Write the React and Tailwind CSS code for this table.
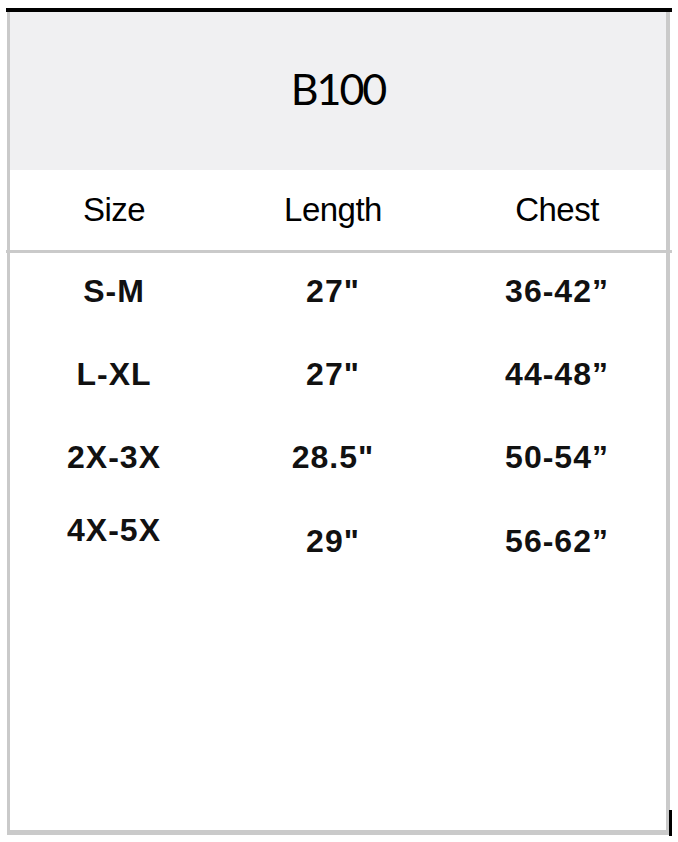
const rows = [
  { size: 'S-M', length: '27"', chest: '36-42”' },
  { size: 'L-XL', length: '27"', chest: '44-48”' },
  { size: '2X-3X', length: '28.5"', chest: '50-54”' },
  { size: '4X-5X', length: '29"', chest: '56-62”', raised: true },
];

const SizeChart = () => {
  return (
    <div className="relative ml-[6px] pt-[8px] w-[666px]">
      {/* top rule */}
      <div className="h-[4px] bg-black w-full" />

      <div className="ml-[1px] w-[663px] h-[823px] border-l-[3px] border-r-[4px] border-b-[5px] border-[#cacaca] flex flex-col">
        {/* title band */}
        <div className="h-[158px] bg-[#f0f0f2] flex justify-center pt-[55px]">
          <h1 className="font-['Lato',sans-serif] text-[43px] leading-none text-black tracking-[-2px]">B100</h1>
        </div>

        {/* column labels */}
        <div className="h-[80px] grid grid-cols-[208px_230px_1fr] pt-[23px] font-['Liberation_Sans',Arial,sans-serif] text-[33px] leading-none text-black tracking-[-0.5px]">
          <div className="text-center">Size</div>
          <div className="text-center">Length</div>
          <div className="text-center">Chest</div>
        </div>
        <div className="-ml-[4px] w-[666px] h-[3px] bg-[#cacaca]" />

        {/* rows */}
        <div className="font-['Liberation_Sans',Arial,sans-serif] text-[32px] font-bold leading-none tracking-[1px] text-[#111]">
          {rows.map((r) => (
            <div key={r.size} className="h-[83px] grid grid-cols-[208px_230px_1fr]">
              <div className={`text-center ${r.raised ? 'pt-[12px]' : 'pt-[22px]'}`}>{r.size}</div>
              <div className={`text-center ${r.raised ? 'pt-[23px]' : 'pt-[22px]'}`}>{r.length}</div>
              <div className={`text-center ${r.raised ? 'pt-[23px]' : 'pt-[22px]'}`}>{r.chest}</div>
            </div>
          ))}
        </div>
      </div>

      {/* stray edge mark bottom right */}
      <div className="absolute left-[663px] top-[810px] w-[3px] h-[26px] bg-black" />
    </div>
  );
};

export default function App() {
  return (
    <div className="w-[678px] h-[842px] bg-white overflow-hidden">
      <SizeChart />
    </div>
  );
}
